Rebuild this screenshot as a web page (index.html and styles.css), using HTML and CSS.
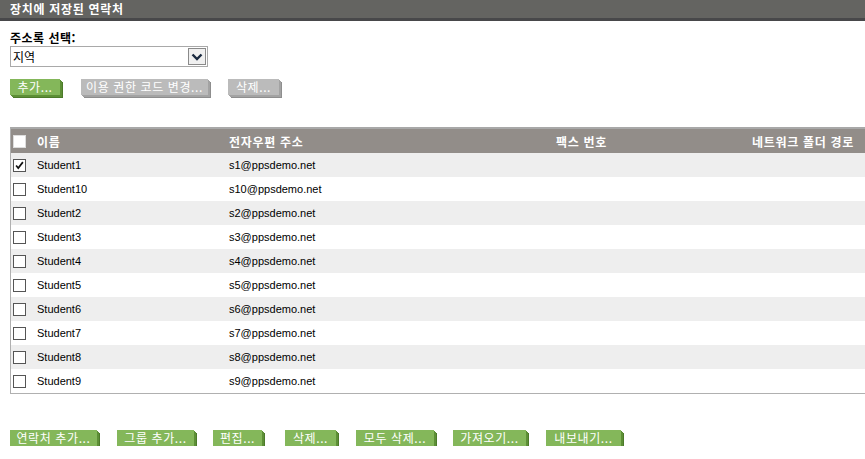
FILE: index.html
```html
<!DOCTYPE html>
<html lang="ko">
<head>
<meta charset="utf-8">
<link rel="stylesheet" href="styles.css">
</head>
<body>
<div class="titlebar">장치에 저장된 연락처</div>
<div class="content">
  <div class="label">주소록 선택:</div>
  <div class="select">
    <span class="select-text">지역</span>
    <span class="select-btn"><svg width="12" height="8" viewBox="0 0 12 8"><path d="M1.5 1.5 L6 6 L10.5 1.5" fill="none" stroke="#1a2a40" stroke-width="2.4"/></svg></span>
  </div>
  <div class="btnrow top">
    <span class="btn green t50">추가...</span>
    <span class="btn gray t127">이용 권한 코드 변경...</span>
    <span class="btn gray t51">삭제...</span>
  </div>
  <div class="table">
    <div class="row head">
      <span class="cb"><span class="box"></span></span>
      <span class="cell">이름</span>
      <span class="cell">전자우편 주소</span>
      <span class="cell">팩스 번호</span>
      <span class="cell">네트워크 폴더 경로</span>
    </div>
    <div class="row alt">
      <span class="cb"><span class="box"><svg width="13" height="13" viewBox="0 0 13 13"><path d="M2.5 6.5 L5 9.5 L10.5 2.5" fill="none" stroke="#111" stroke-width="2"/></svg></span></span>
      <span class="cell">Student1</span><span class="cell">s1@ppsdemo.net</span><span class="cell"></span><span class="cell"></span>
    </div>
    <div class="row"><span class="cb"><span class="box"></span></span><span class="cell">Student10</span><span class="cell">s10@ppsdemo.net</span><span class="cell"></span><span class="cell"></span></div>
    <div class="row alt"><span class="cb"><span class="box"></span></span><span class="cell">Student2</span><span class="cell">s2@ppsdemo.net</span><span class="cell"></span><span class="cell"></span></div>
    <div class="row"><span class="cb"><span class="box"></span></span><span class="cell">Student3</span><span class="cell">s3@ppsdemo.net</span><span class="cell"></span><span class="cell"></span></div>
    <div class="row alt"><span class="cb"><span class="box"></span></span><span class="cell">Student4</span><span class="cell">s4@ppsdemo.net</span><span class="cell"></span><span class="cell"></span></div>
    <div class="row"><span class="cb"><span class="box"></span></span><span class="cell">Student5</span><span class="cell">s5@ppsdemo.net</span><span class="cell"></span><span class="cell"></span></div>
    <div class="row alt"><span class="cb"><span class="box"></span></span><span class="cell">Student6</span><span class="cell">s6@ppsdemo.net</span><span class="cell"></span><span class="cell"></span></div>
    <div class="row"><span class="cb"><span class="box"></span></span><span class="cell">Student7</span><span class="cell">s7@ppsdemo.net</span><span class="cell"></span><span class="cell"></span></div>
    <div class="row alt"><span class="cb"><span class="box"></span></span><span class="cell">Student8</span><span class="cell">s8@ppsdemo.net</span><span class="cell"></span><span class="cell"></span></div>
    <div class="row"><span class="cb"><span class="box"></span></span><span class="cell">Student9</span><span class="cell">s9@ppsdemo.net</span><span class="cell"></span><span class="cell"></span></div>
  </div>
  <div class="btnrow bottom">
    <span class="btn green w87">연락처 추가...</span>
    <span class="btn green w77">그룹 추가...</span>
    <span class="btn green w49">편집...</span>
    <span class="btn green w51">삭제...</span>
    <span class="btn green w78">모두 삭제...</span>
    <span class="btn green w73">가져오기...</span>
    <span class="btn green w75">내보내기...</span>
  </div>
</div>
</body>
</html>
```
FILE: styles.css
```css
html, body {
  margin: 0;
  padding: 0;
  background: #fff;
  overflow: hidden;
  font-family: "Liberation Sans", Arial, "Noto Sans CJK KR", sans-serif;
}
.titlebar {
  height: 18px;
  line-height: 18px;
  background: #646461;
  border-bottom: 3px solid #48484a;
  color: #fff;
  font-family: "Noto Sans CJK KR", sans-serif;
  font-weight: bold;
  font-size: 12px;
  letter-spacing: 0.7px;
  padding-left: 10px;
}
.content {
  padding-left: 10px;
}
.label {
  margin-top: 10px;
  font-family: "Noto Sans CJK KR", sans-serif;
  font-weight: bold;
  font-size: 12px;
  letter-spacing: 0.5px;
  line-height: 14px;
  color: #000;
}
.select {
  margin-top: 1px;
  width: 196px;
  height: 19px;
  border: 1px solid #a9a9a9;
  display: flex;
  align-items: center;
  justify-content: space-between;
  box-sizing: content-box;
}
.select-text {
  font-family: "Noto Sans CJK KR", sans-serif;
  font-size: 12px;
  padding-left: 2px;
  color: #000;
}
.select-btn {
  width: 18px;
  height: 17px;
  margin-right: 1px;
  border: 1px solid #8a8a8a;
  background: #f0f0f0;
  display: flex;
  align-items: center;
  justify-content: center;
  box-sizing: border-box;
}
.btnrow {
  display: flex;
  align-items: flex-start;
}
.btnrow.top {
  margin-top: 12px;
  height: 19px;
}
.btn {
  display: inline-block;
  height: 16px;
  line-height: 16px;
  padding: 0;
  text-align: center;
  font-family: "Noto Sans CJK KR", sans-serif;
  font-size: 12px;
  letter-spacing: 0.6px;
  color: #fff;
  white-space: nowrap;
}
.btn.green {
  background: #84b75a;
  box-shadow: 1px 1px 0 #5d8f36, 2px 2px 0 #5d8f36, 3px 3px 0 #4c7a2a;
}
.btn.gray {
  background: #bbbbbb;
  box-shadow: 1px 1px 0 #a3a3a3, 2px 2px 0 #a3a3a3, 3px 3px 0 #8e8e8e;
}
.t50 { width: 50px; margin-right: 21px; }
.t127 { width: 127px; margin-right: 20px; }
.t51 { width: 51px; }
.table {
  margin-top: 29px;
  border: 1px solid #b0b0b0;
  border-right: none;
  border-top: 2px solid #a8a8a8;
}
.row {
  display: grid;
  grid-template-columns: 22px 192px 327px 196px 1fr;
  height: 24px;
  align-items: center;
  font-size: 11px;
  color: #000;
  background: #fff;
}
.row.alt {
  background: #eeeeee;
}
.row.head {
  background: #928d89;
  color: #fff;
  font-family: "Noto Sans CJK KR", sans-serif;
  font-weight: bold;
  font-size: 12px;
  letter-spacing: 0.7px;
}
.cell {
  padding-left: 4px;
  white-space: nowrap;
  overflow: hidden;
}
.cb {
  display: flex;
  align-items: center;
  padding-left: 2px;
}
.box {
  width: 13px;
  height: 13px;
  box-sizing: border-box;
  border: 1px solid #555;
  background: #fff;
  display: flex;
  align-items: center;
  justify-content: center;
}
.box svg {
  display: block;
}
.row.head .box {
  border-color: #ddd;
}
.btnrow.bottom {
  margin-top: 36px;
}
.w87 { width: 87px; margin-right: 20px; }
.w77 { width: 77px; margin-right: 19px; }
.w49 { width: 49px; margin-right: 23px; }
.w51 { width: 51px; margin-right: 20px; }
.w78 { width: 78px; margin-right: 19px; }
.w73 { width: 73px; margin-right: 20px; }
.w75 { width: 75px; }
```
